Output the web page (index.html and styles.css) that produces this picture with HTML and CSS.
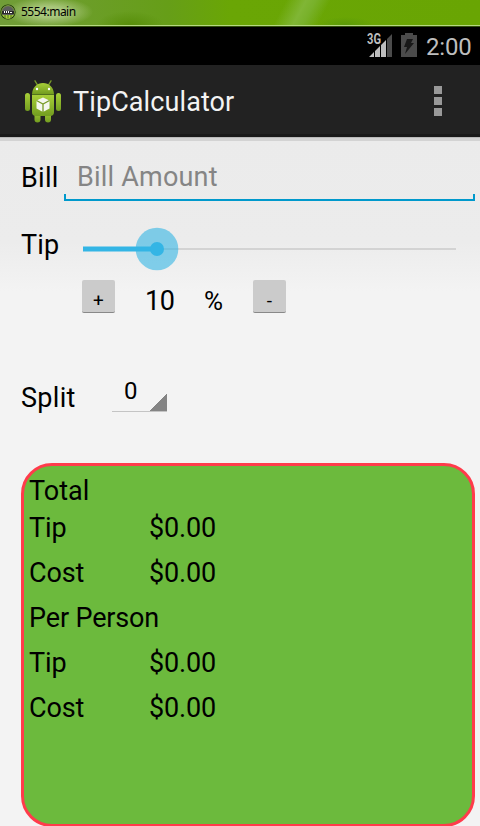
FILE: index.html
```html
<!DOCTYPE html>
<html lang="en">
<head>
<meta charset="utf-8">
<title>TipCalculator</title>
<link rel="stylesheet" href="styles.css">
</head>
<body>
<header class="window-bar">
  <svg class="window-icon" width="16" height="16" viewBox="0 0 16 16">
    <circle cx="8" cy="8" r="7.6" fill="#182d0c"/>
    <circle cx="8" cy="8" r="6.4" fill="#5d5d5d" stroke="#8db839" stroke-width=".8"/>
    <path d="M2 7h12v3H2z" fill="#292929"/>
    <path d="M4 7h1v2H4zM6 7h1v2H6zM8 7h1v2H8zM10 8h2v1h-2z" fill="#fff"/>
    <path d="M2.5 11h11a6 6 0 0 1-11 0z" fill="#a7d13b"/>
    <path d="M5 11v3M8 11v3M11 11v3" stroke="#294213" stroke-width=".7"/>
  </svg>
  <span class="window-title">5554:main</span>
</header>
<div class="status-bar">
  <svg class="signal" width="26" height="26" viewBox="0 0 26 26">
    <path d="M2 25l5-5v5zM8 25v-6l5-5v11zM14 25V13l5-5v17z" fill="#bebebe"/>
    <path d="M20 25V7l5-5v23z" fill="#4b4b4b"/>
    <text class="network" x="0" y="12" textLength="14" lengthAdjust="spacingAndGlyphs">3G</text>
  </svg>
  <svg class="battery" width="16" height="24" viewBox="0 0 16 24">
    <path d="M0 2h4V0h8v2h4v22H0z" fill="#4b4b4b"/>
    <path d="M6 6h6l-2 4h3L4 21l2-7H3z" fill="#181818"/>
  </svg>
  <span class="clock">2:00</span>
</div>
<div class="action-bar">
  <svg class="app-icon" width="36" height="43" viewBox="0 0 36 43">
    <defs>
      <linearGradient id="skin" x1="0" y1="0" x2="0" y2="1"><stop offset="0" stop-color="#a8cf38"/><stop offset="1" stop-color="#739d20"/></linearGradient>
    </defs>
    <path d="M10 .8l3 5M26 .8l-3 5" stroke="#789b28" stroke-width="1.3" stroke-linecap="round"/>
    <g fill="url(#skin)">
      <path d="M7 14C7.500 7 12 3 18 3s10.500 4 11 11z"/>
      <rect x="0" y="13" width="5" height="18" rx="2.500"/>
      <rect x="31" y="13" width="5" height="18" rx="2.500"/>
      <rect x="9.500" y="30" width="6" height="12.500" rx="3"/>
      <rect x="20" y="30" width="6" height="12.500" rx="3"/>
      <path d="M7 15h22v17q0 4-4 4H11q-4 0-4-4z"/>
    </g>
    <path d="M7 14.500h22" stroke="#52731c"/>
    <circle cx="12" cy="9" r="1.200" fill="#fff"/><circle cx="24" cy="9" r="1.200" fill="#fff"/>
    <path d="M18 17.500l6.500 3v8L18 32l-6.500-3.500v-8z" fill="#f5f7ef"/>
    <path d="M11.500 20.500L18 24l6.500-3.500M18 24v8" fill="none" stroke="#789b28" stroke-width="1.300"/>
  </svg>
  <h1 class="app-title">TipCalculator</h1>
  <div class="overflow"><i></i><i></i><i></i></div>
</div>
<main class="content">
  <div class="bill-row">
    <span class="label">Bill</span>
    <div class="bill-input"><span>Bill Amount</span></div>
  </div>
  <div class="tip-row">
    <span class="label tip-label">Tip</span>
    <svg class="slider" width="374" height="44" viewBox="0 0 374 44">
      <path d="M0 22h373" stroke="#d3d3d3" stroke-width="2"/>
      <path d="M0 22h74" stroke="#33b5e5" stroke-width="5"/>
      <circle cx="74" cy="22" r="21.300" fill="#33b5e5" fill-opacity=".6"/>
      <circle cx="74" cy="22" r="7" fill="#33b5e5"/>
    </svg>
  </div>
  <div class="step-row">
    <span class="step">+</span>
    <span class="tip-value">10</span>
    <span class="percent">%</span>
    <span class="step">-</span>
  </div>
  <div class="split-row">
    <span class="label">Split</span>
    <div class="spinner"><span>0</span></div>
  </div>
  <section class="totals">
    <div class="heading">Total</div>
    <div class="total-row"><span>Tip</span><span>$0.00</span></div>
    <div class="total-row"><span>Cost</span><span>$0.00</span></div>
    <div class="total-row"><span>Per Person</span></div>
    <div class="total-row"><span>Tip</span><span>$0.00</span></div>
    <div class="total-row"><span>Cost</span><span>$0.00</span></div>
  </section>
</main>
</body>
</html>
```
FILE: styles.css
```css
* { box-sizing: border-box; }
body {
  margin: 0;
  width: 480px;
  height: 826px;
  overflow: hidden;
  font: 27px/36px Roboto, sans-serif;
  color: #000;
  background: #f3f3f3;
}
svg { display: block; flex: none; }
.window-bar {
  display: flex;
  height: 27px;
  padding-top: 4px;
  border-bottom: 1px solid #31500c;
  box-shadow: inset 0 -1px #b5d880;
  background:
    radial-gradient(ellipse 44px 15px at 49px 12px, #a9c77c 35%, transparent),
    radial-gradient(ellipse 34px 15px at 130px 26px, #568d08, transparent),
    radial-gradient(ellipse 28px 8px at 345px 25px, #5b9a08, transparent),
    linear-gradient(118deg, transparent 58%, #80b635 62%, #78b12a 64%, transparent 67%),
    linear-gradient(90deg, #719d38, #669e18 35%, #6aa605 48%, #69a503);
}
.window-icon { width: 16px; height: 16px; }
.window-title { margin-left: 5px; font: 12px/16px "Noto Sans", sans-serif; letter-spacing: -.5px; }
.status-bar {
  display: flex;
  height: 38px;
  padding: 5px 9px 0 367px;
  background: #000;
}
.signal { margin-right: 8px; }
.network { font: bold 14px Roboto, sans-serif; fill: #bebebe; stroke: #000; stroke-width: 1px; paint-order: stroke; }
.battery { margin-top: 1px; }
.clock { margin-left: 9px; font-size: 24px; line-height: 30px; letter-spacing: -.2px; color: #bebebe; white-space: nowrap; }
.action-bar {
  display: flex;
  height: 72px;
  padding: 15px 38px 0 25px;
  background: #222;
  box-shadow: inset 0 -3px #191919;
}
.app-title { margin: 4px 0 0 12px; font-size: 27px; font-weight: 400; letter-spacing: .1px; color: #f3f3f3; }
.overflow { display: grid; gap: 3px; align-content: start; margin: 6px 0 0 auto; }
.overflow i { display: block; width: 8px; height: 8px; background: #999; }
.content {
  height: 689px;
  padding: 4px 5px 0 21px;
  background: linear-gradient(#b9b9b9 1px, #d3d3d3 1px 4px, transparent 4px), linear-gradient(#ebebeb 0, #ececec 105px, #f3f3f3 155px);
}
.bill-row { display: flex; height: 60px; padding-top: 19px; }
.label { flex: none; width: 43px; letter-spacing: .3px; }
.tip-label { letter-spacing: .1px; }
.bill-input {
  position: relative;
  flex: 1;
  height: 42px;
  margin-top: -1px;
  padding-left: 13px;
  border-bottom: 2px solid #0099cc;
  letter-spacing: .2px;
  color: #858585;
}
.bill-input::before, .bill-input::after {
  content: "";
  position: absolute;
  bottom: 0;
  width: 2px;
  height: 5px;
  background: #0099cc;
}
.bill-input::before { left: 0; }
.bill-input::after { right: 0; }
.tip-row { display: flex; height: 78px; padding-top: 26px; }
.slider { margin: 0 0 0 19px; }
.step-row { display: flex; height: 87px; padding-left: 61px; }
.step {
  width: 33px;
  height: 33px;
  margin-top: 1px;
  border-bottom: 1px solid #888;
  border-radius: 2px;
  background: #cbcbcb;
  font-size: 19px;
  line-height: 42px;
  text-align: center;
}
.tip-value { width: 59px; margin-left: 30px; padding-top: 4px; letter-spacing: -.5px; }
.percent { width: 49px; padding-top: 4px; font-size: 26px; }
.split-row { display: flex; height: 97px; padding-top: 14px; }
.spinner {
  width: 55px;
  height: 40px;
  margin: -8px 0 0 48px;
  padding: 1px 0 0 12px;
  border-bottom: 1px solid #c4c4c4;
  font-size: 24px;
  background: linear-gradient(135deg, transparent 50%, #848484 50%) right bottom / 18px 18px no-repeat border-box;
}
.totals {
  width: 454px;
  height: 364px;
  padding: 7px 5px;
  border: 3px solid #ff3b4b;
  border-radius: 31px;
  background: #6cba3d;
}
.heading { height: 37px; }
.total-row { display: grid; grid-template-columns: 120px 1fr; height: 45px; letter-spacing: -.15px; white-space: nowrap; }
```
